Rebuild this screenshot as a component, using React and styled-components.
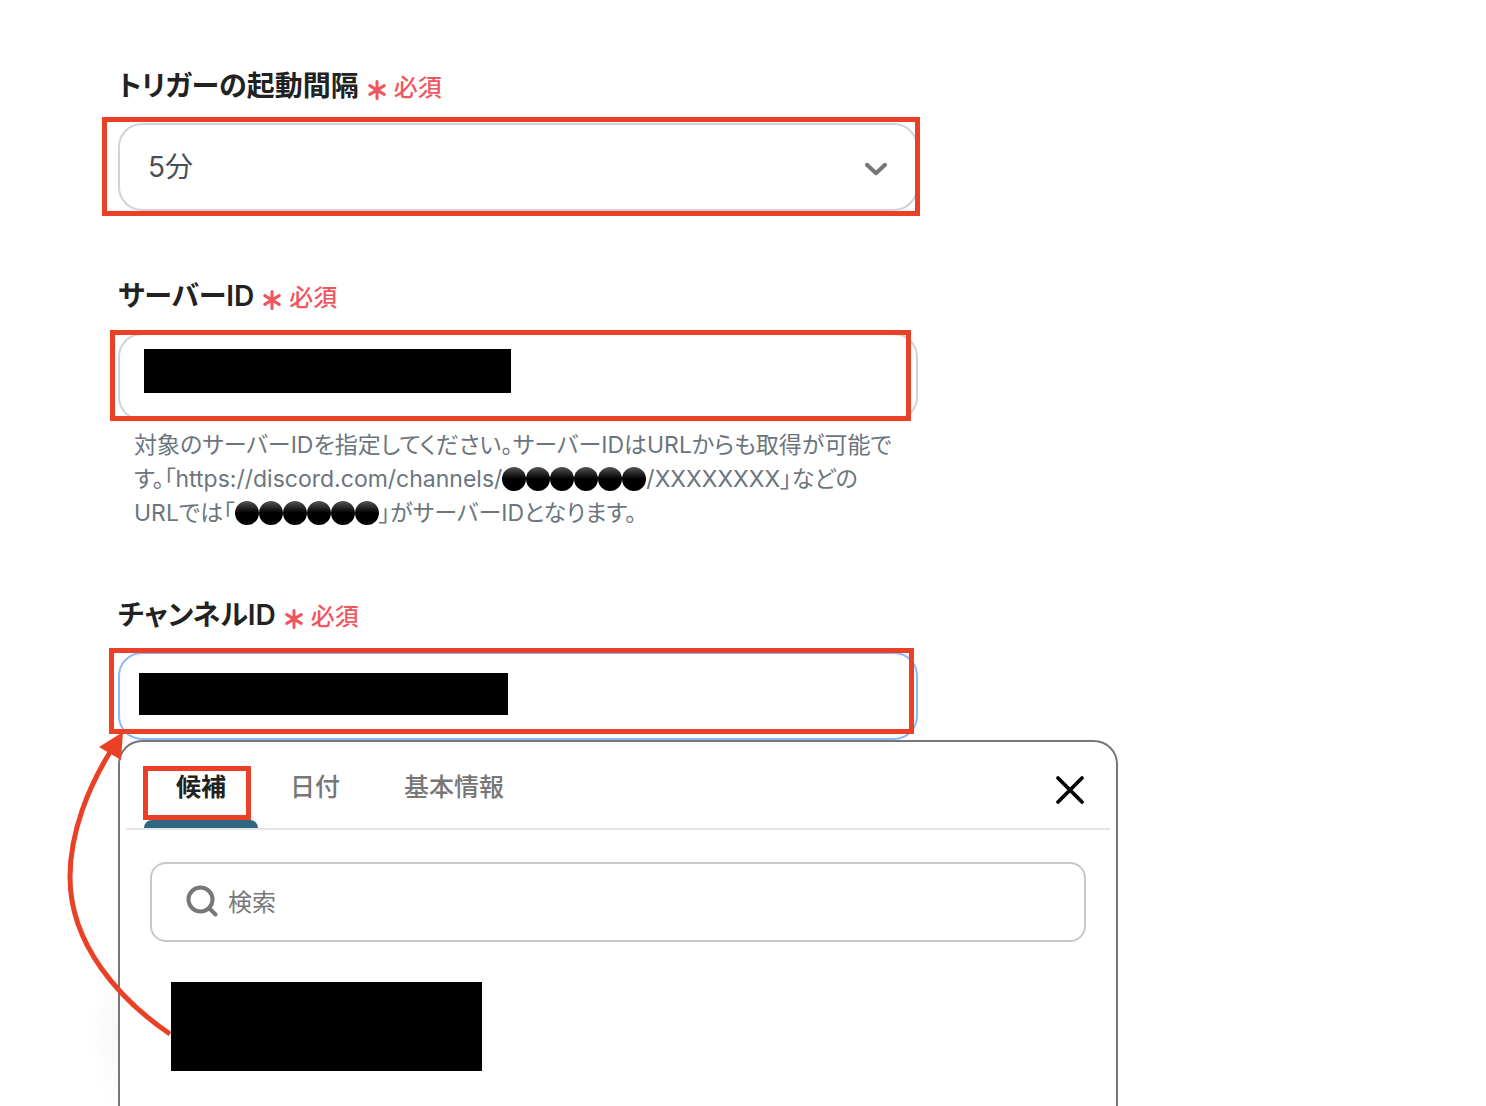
import React from "react";
import styled, { createGlobalStyle } from "styled-components";

const accent = "#ea4025";

const AsteriskIcon = () => (
  <svg width="18" height="20" viewBox="0 0 18 20" aria-hidden="true">
    <path
      d="M9 1.5V18.5M1.8 5.6L16.2 14.4M16.2 5.6L1.8 14.4"
      stroke="#f0565f"
      strokeWidth="3"
      strokeLinecap="round"
    />
  </svg>
);

const FieldLabel = ({ htmlFor, children }) => (
  <LabelRow htmlFor={htmlFor}>
    <LabelText>{children}</LabelText>
    <Required>
      <AsteriskIcon />
      必須
    </Required>
  </LabelRow>
);

const Dots = () =>
  Array.from({ length: 6 }, (_, i) => <Dot key={i}>●</Dot>);

const tabs = ["候補", "日付", "基本情報"];

const App = () => {
  return (
    <Page>
      <GlobalStyle />
      <Form>
        <Field>
          <FieldLabel htmlFor="interval">トリガーの起動間隔</FieldLabel>
          <Control>
            <Select id="interval" defaultValue="5">
              <option value="5">5分</option>
            </Select>
            <Chevron viewBox="0 0 24 14" aria-hidden="true">
              <path d="M3 2.8L12 11.2L21 2.8" />
            </Chevron>
            <Highlight $inset="-6px -2px -5px -16px" />
          </Control>
        </Field>

        <Field>
          <FieldLabel htmlFor="server">サーバーID</FieldLabel>
          <Control>
            <Input id="server" type="text" />
            <Redaction $top={16} $left={26} $width={367} $height={44} />
            <Highlight $inset="-3px 7px 0 -8px" />
          </Control>
          <Hint>
            対象のサーバーIDを指定してください。サーバーIDはURLからも取得が可能で
            <br />
            す。「https://discord.com/channels/
            <Dots />
            /XXXXXXXX」などの
            <br />
            URLでは「
            <Dots />
            」がサーバーIDとなります。
          </Hint>
        </Field>

        <Field>
          <FieldLabel htmlFor="channel">チャンネルID</FieldLabel>
          <Control>
            <Input id="channel" type="text" $active />
            <Redaction $top={21} $left={21} $width={369} $height={42} />
            <Highlight $inset="-4px 4px 6px -9px" $front />
          </Control>
        </Field>
      </Form>

      <Panel>
        <TabBar>
          <TabList role="tablist">
            {tabs.map((tab, i) => (
              <Tab key={tab} role="tab" type="button" aria-selected={i === 0}>
                {tab}
                {i === 0 && <Highlight $inset="24px 7px 8px -1px" />}
              </Tab>
            ))}
          </TabList>
          <CloseButton type="button" aria-label="閉じる">
            <svg width="32" height="32" viewBox="0 0 32 32" aria-hidden="true">
              <path
                d="M4 4L28 28M28 4L4 28"
                stroke="#000"
                strokeWidth="3.8"
                strokeLinecap="round"
              />
            </svg>
          </CloseButton>
        </TabBar>
        <SearchBox>
          <svg width="34" height="34" viewBox="0 0 34 34" aria-hidden="true">
            <circle cx="14.5" cy="14.5" r="12" />
            <path d="M23.5 23.5L29.5 29.5" />
          </svg>
          <SearchInput type="search" placeholder="検索" aria-label="検索" />
        </SearchBox>
        <Candidates />
        <Arrow viewBox="60 730 120 310" aria-hidden="true">
          <path d="M170 1034C120 1000 70 945 70 877C70 833 88 787 112 749" />
          <polygon points="123,732 99,747 121,760" />
        </Arrow>
      </Panel>
    </Page>
  );
};

const GlobalStyle = createGlobalStyle`
  * {
    box-sizing: border-box;
  }
  body {
    margin: 0;
    background: #fff;
  }
  body, button, input, select {
    font-family: Inter, "Noto Sans CJK JP", sans-serif;
    font-feature-settings: "palt";
  }
`;

const Page = styled.main`
  display: flex;
  flex-direction: column;
  min-height: 100vh;
  padding: 65px 118px 0;
  overflow: hidden;
`;

const Form = styled.form`
  display: flex;
  flex-direction: column;
  gap: 64px;
  width: 100%;
  max-width: 800px;
`;

const Field = styled.div`
  display: flex;
  flex-direction: column;
`;

const LabelRow = styled.label`
  display: flex;
  align-items: center;
  gap: 9px;
  height: 42px;
  margin-bottom: 16px;
  line-height: 42px;
`;

const LabelText = styled.span`
  color: #222;
  font-size: 28px;
  font-weight: 600;
`;

const Required = styled.span`
  display: flex;
  align-items: center;
  gap: 8px;
  padding-top: 4px;
  color: #f0565f;
  font-size: 24px;
  font-weight: 500;

  svg {
    margin-top: 4px;
  }
`;

const Control = styled.div`
  position: relative;
`;

const Input = styled.input`
  display: block;
  width: 100%;
  height: 88px;
  padding: 0 28px;
  border: 2px solid ${({ $active }) => ($active ? "#8bb9fa" : "#ced4da")};
  border-radius: 24px;
  outline: none;
  background: #fff;
  color: #495057;
  font-size: 28px;
`;

const Select = styled(Input).attrs({ as: "select" })`
  appearance: none;
`;

const Chevron = styled.svg`
  position: absolute;
  top: 39px;
  right: 30px;
  width: 24px;
  height: 14px;
  fill: none;
  stroke: #777;
  stroke-width: 4;
  stroke-linecap: round;
  stroke-linejoin: round;
  pointer-events: none;
`;

const Highlight = styled.span`
  position: absolute;
  inset: ${({ $inset }) => $inset};
  z-index: ${({ $front }) => ($front ? 2 : 1)};
  border: 5px solid ${accent};
  pointer-events: none;
`;

const Redaction = styled.span`
  position: absolute;
  top: ${({ $top }) => $top}px;
  left: ${({ $left }) => $left}px;
  width: ${({ $width }) => $width}px;
  height: ${({ $height }) => $height}px;
  background: #000;
`;

const Hint = styled.p`
  margin: 7px 0 0;
  padding-left: 16px;
  color: #6c757d;
  font-size: 23px;
  line-height: 34px;
  white-space: nowrap;
`;

const Dot = styled.span`
  display: inline-block;
  width: 24px;
  height: 24px;
  border-radius: 50%;
  background: linear-gradient(#555, #000 50%);
  color: transparent;
  font-size: 20px;
  line-height: 24px;
  text-align: center;
  vertical-align: 1px;
`;

const Panel = styled.section`
  position: relative;
  flex: 1;
  display: flex;
  flex-direction: column;
  width: 100%;
  max-width: 1000px;
  border: 2px solid #777;
  border-bottom: 0;
  border-radius: 24px 24px 0 0;

  &::before {
    content: "";
    position: absolute;
    top: 210px;
    left: -30px;
    width: 28px;
    height: 160px;
    background: radial-gradient(
      ellipse at right,
      rgba(0, 20, 10, 0.03),
      transparent 70%
    );
  }
`;

const TabBar = styled.div`
  display: flex;
  align-items: center;
  justify-content: space-between;
  margin: 0 6px;
  padding: 0 24px 0 18px;
  border-bottom: 2px solid #e5e5e5;
`;

const TabList = styled.div`
  display: flex;
`;

const Tab = styled.button`
  position: relative;
  height: 86px;
  padding: 0 32px;
  border: 0;
  background: none;
  color: #777;
  font-size: 25px;
  font-weight: 500;

  &[aria-selected="true"] {
    color: #222;
    font-weight: 600;
  }

  &[aria-selected="true"]::after {
    content: "";
    position: absolute;
    inset: auto 0 0;
    height: 8px;
    border-radius: 8px 8px 0 0;
    background: #2f6782;
  }
`;

const CloseButton = styled.button`
  display: flex;
  margin-top: 10px;
  padding: 0;
  border: 0;
  background: none;
`;

const SearchBox = styled.div`
  display: flex;
  align-items: center;
  gap: 8px;
  height: 80px;
  margin: 32px 30px 0;
  padding: 0 34px;
  border: 2px solid #c8c8c8;
  border-radius: 16px;

  svg {
    flex: none;
    fill: none;
    stroke: #777;
    stroke-width: 4;
    stroke-linecap: round;
  }
`;

const SearchInput = styled.input`
  flex: 1;
  min-width: 0;
  padding: 0;
  border: 0;
  outline: none;
  background: none;
  font-size: 24px;

  &::placeholder {
    color: #777;
  }
`;

const Candidates = styled.div`
  width: 311px;
  height: 89px;
  margin: 40px 0 0 51px;
  background: #000;
`;

const Arrow = styled.svg`
  position: absolute;
  top: -12px;
  left: -60px;
  z-index: 3;
  width: 120px;
  height: 310px;
  pointer-events: none;

  path {
    fill: none;
    stroke: ${accent};
    stroke-width: 5;
  }

  polygon {
    fill: ${accent};
  }
`;

export default App;
